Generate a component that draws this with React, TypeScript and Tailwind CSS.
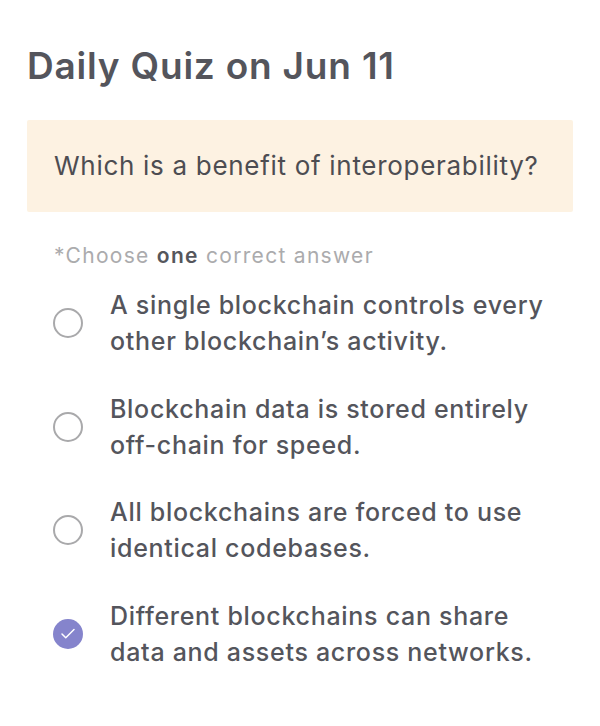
import { Check } from "lucide-react";

type Option = {
  id: string;
  label: string;
  selected?: boolean;
};

const options: Option[] = [
  { id: "a", label: "A single blockchain controls every other blockchain\u2019s activity." },
  { id: "b", label: "Blockchain data is stored entirely off-chain for speed." },
  { id: "c", label: "All blockchains are forced to use identical codebases." },
  { id: "d", label: "Different blockchains can share data and assets across networks.", selected: true },
];

function Radio({ selected }: { selected?: boolean }) {
  if (selected) {
    return (
      <span className="flex size-[30px] shrink-0 items-center justify-center rounded-full bg-[#8584cc]">
        <Check className="size-[18px] text-white" strokeWidth={2} />
      </span>
    );
  }
  return <span className="size-[30px] shrink-0 rounded-full border-[2.5px] border-[#a9a9ab]" />;
}

export default function App() {
  return (
    <div className="min-h-[726px] bg-white px-[27px] pt-[40px] font-['Inter',sans-serif] text-[#54555c]">
      <h1 className="text-[37px] font-semibold leading-[52px] tracking-[0.8px]">Daily Quiz on Jun 11</h1>

      <div className="mt-[28px] flex h-[92px] items-center rounded-[2px] bg-[#fdf2e2] px-[27px]">
        <p className="text-[26px] leading-[32px] tracking-[0.7px] text-[#4d4d52]">
          Which is a benefit of interoperability?
        </p>
      </div>

      <p className="mt-[30px] pl-[27px] text-[21px] leading-[28px] tracking-[1.3px] text-[#ababad]">
        *Choose <span className="font-semibold text-[#55565c]">one</span> correct answer
      </p>

      <ul className="mt-[17px] flex flex-col gap-[31.7px]">
        {options.map((option) => (
          <li key={option.id} className="flex items-center gap-[27px] pl-[26px]">
            <Radio selected={option.selected} />
            <span className="max-w-[452px] text-[25px] font-medium leading-[36px] tracking-[0.7px] text-[#54555c]">
              {option.label}
            </span>
          </li>
        ))}
      </ul>
    </div>
  );
}
